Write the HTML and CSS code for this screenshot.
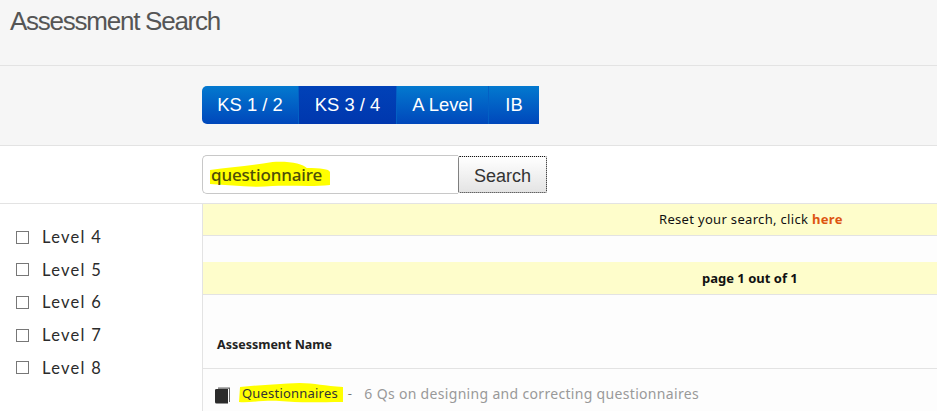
FILE: index.html
```html
<!DOCTYPE html>
<html lang="en">
<head>
<meta charset="utf-8">
<title>Assessment Search</title>
<link rel="stylesheet" href="styles.css">
</head>
<body>
<header class="title-bar"><h1 class="title">Assessment Search</h1></header>
<nav class="tab-band">
  <div class="tabs">
    <a class="tab tab-first">KS 1 / 2</a>
    <a class="tab tab-active">KS 3 / 4</a>
    <a class="tab">A Level</a>
    <a class="tab tab-last">IB</a>
  </div>
</nav>
<div class="search-row">
  <div class="search-box">
    <div class="search-input">
      <svg class="marker marker-input" viewBox="0 0 120 27" preserveAspectRatio="none"><path d="M0 9 C20 6 40 5 62 1 C80 0 92 3 96 7 C110 7 118 8 119 11 L119 24 C100 26 80 24 62 25 C40 27 20 24 0 23 Z"/></svg>
      <span class="search-text">questionnaire</span>
    </div>
    <button class="search-btn">Search</button>
  </div>
</div>
<div class="content">
  <aside class="sidebar">
    <label class="level"><span class="check"></span>Level 4</label>
    <label class="level"><span class="check"></span>Level 5</label>
    <label class="level"><span class="check"></span>Level 6</label>
    <label class="level"><span class="check"></span>Level 7</label>
    <label class="level"><span class="check"></span>Level 8</label>
  </aside>
  <main class="main">
    <div class="notice notice-reset">Reset your search, click <a class="here">here</a></div>
    <div class="spacer"></div>
    <div class="notice notice-page">page 1 out of 1</div>
    <div class="table-head">Assessment Name</div>
    <div class="result">
      <svg class="book" viewBox="0 0 15 16"><path class="book-back" d="M3 0 H15 V14.5 H14 V1.2 H3 Z"/><path class="book-front" d="M0 2.5 Q0 1.5 1.5 1.5 H13 V16 H1.5 Q0 16 0 14.5 Z"/></svg>
      <span class="result-name">
        <svg class="marker marker-result" viewBox="0 0 104 20" preserveAspectRatio="none"><path d="M1 4 C20 2 40 1 60 0 C75 0 85 3 103 4 L103 19 C80 19 60 20 40 18 C25 17 10 20 0 19 Z"/></svg>
        <span class="result-link">Questionnaires</span>
      </span>
      <span class="dash">-</span>
      <span class="desc">6 Qs on designing and correcting questionnaires</span>
    </div>
  </main>
</div>
</body>
</html>
```
FILE: styles.css
```css
* { box-sizing: border-box; }
html, body { margin: 0; height: 411px; overflow: hidden; }
body { background: #fff; font-family: "Noto Sans", "DejaVu Sans", sans-serif; color: #222; }
.title-bar { height: 66px; background: #f6f6f6; border-bottom: 1px solid #e3e3e3; padding: 5px 0 0 10px; }
.title { margin: 0; font: 400 26px/32px "Liberation Sans", Arial, sans-serif; letter-spacing: -1.25px; color: #555; }
.tab-band { height: 80px; background: #f6f6f6; border-bottom: 1px solid #e3e3e3; padding: 20px 0 0 202px; }
.tabs { display: flex; height: 38px; }
.tab { display: flex; align-items: center; justify-content: center; height: 38px; font: 400 18.4px "Liberation Sans", Arial, sans-serif; color: #fff; background: linear-gradient(#0379cf, #0047bb); border-right: 1px solid #0360c4; }
.tab-first { width: 97px; border-radius: 5px 0 0 5px; }
.tab-active { width: 98px; background: linear-gradient(#0142b8, #0037ae); }
.tab:nth-child(3) { width: 92px; }
.tab-last { width: 50px; border-right: 0; }
.search-row { height: 58px; background: #fff; border-bottom: 1px solid #e3e3e3; padding: 9px 0 0 202px; }
.search-box { display: flex; align-items: center; height: 39px; }
.search-input { position: relative; width: 256px; height: 39px; border: 1px solid #c8c8c8; border-right: 0; border-radius: 5px 0 0 5px; background: #fff; padding: 0 0 0 8px; line-height: 37px; font-size: 17px; }
.search-text { position: relative; color: #4e4e08; font-weight: 500; letter-spacing: -0.15px; }
.marker { position: absolute; display: block; fill: #ffff00; }
.marker-input { left: 7px; top: 5px; width: 121px; height: 27px; }
.search-btn { width: 89px; height: 37px; padding: 3px 0 0; margin: 0; border: 1px dotted #111; border-radius: 2px; background: linear-gradient(#fff, #e4e4e4); font: 400 18px "Liberation Sans", Arial, sans-serif; color: #333; }
.content { display: flex; height: 207px; }
.sidebar { width: 202px; background: #fff; padding: 17px 0 0 16px; display: flex; flex-direction: column; }
.level { display: flex; align-items: center; height: 32.6px; font: 400 16.5px "Lato", sans-serif; color: #2b2b2b; letter-spacing: 1.3px; }
.check { width: 13px; height: 13px; border: 1px solid #777; margin-right: 13px; background: #fff; }
.main { flex: 1; border-left: 1px solid #e3e3e3; background: #fdfdfd; min-width: 0; }
.notice { height: 33px; background: #fefdcb; border-bottom: 1px solid #e3e3e3; font-size: 13px; line-height: 32px; color: #111; }
.notice-reset { height: 32px; line-height: 31px; padding-left: 456px; letter-spacing: 0.32px; }
.here { color: #dd5511; font-weight: 700; }
.spacer { height: 26px; }
.notice-page { padding-left: 499px; font-weight: 700; }
.table-head { height: 74px; padding: 41px 0 0 14px; border-bottom: 1px solid #e3e3e3; font-size: 12.5px; font-weight: 700; line-height: 18px; color: #222; }
.result { display: flex; align-items: center; height: 42px; padding: 6px 0 0 12px; font-size: 14px; letter-spacing: 0.32px; }
.book { width: 15px; height: 17px; margin-right: 12px; margin-top: 4px; }
.book-back { fill: #666; }
.book-front { fill: #2b2b2b; }
.result-name { position: relative; display: inline-block; font-size: 13px; color: #333; letter-spacing: 0.2px; }
.marker-result { left: -3px; top: -1px; width: 105px; height: 20px; }
.result-link { position: relative; }
.dash { margin: 0 12px 0 10px; color: #777; font-size: 13px; }
.desc { color: #999; }
```
